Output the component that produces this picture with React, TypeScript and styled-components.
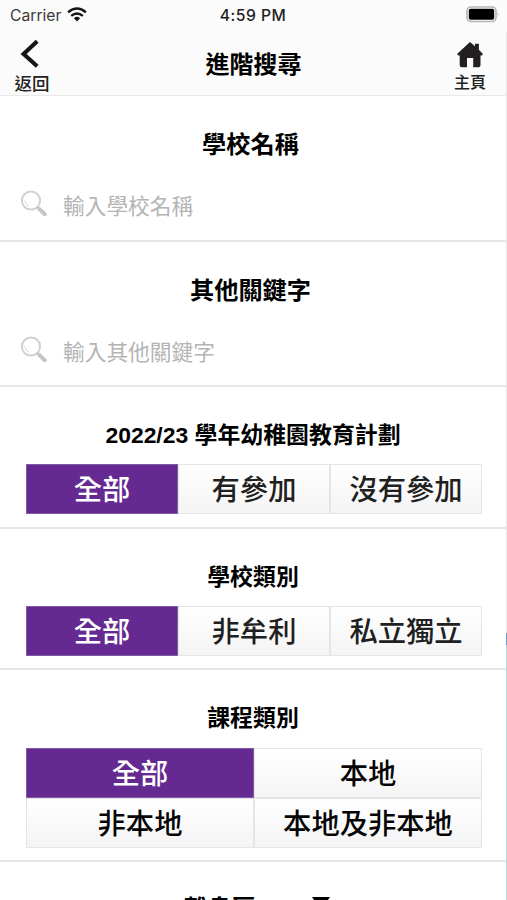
import React from "react";
import styled, { createGlobalStyle } from "styled-components";

const GlobalStyle = createGlobalStyle`
  * { box-sizing: border-box; }
  html, body { margin: 0; padding: 0; background: #fff; overflow: hidden; }
  body { font-family: "Liberation Sans", "Noto Sans CJK TC", sans-serif; color: #000; }
`;

const Screen = styled.div`
  position: relative;
  width: 507px;
  height: 900px;
  overflow: hidden;
  display: flex;
  flex-direction: column;
  background: #fff;
`;

const StatusBar = styled.div`
  display: grid;
  grid-template-columns: 1fr auto 1fr;
  align-items: center;
  flex: none;
  height: 32px;
  padding: 0 7px 2px 10px;
  background: #fbfbfb;
  font-family: Inter, sans-serif;
  font-size: 15.7px;
  color: #3a3a3a;
`;

const Carrier = styled.div`
  display: flex;
  align-items: center;
  gap: 6px;
  svg { margin-top: -1px; }
`;

const Clock = styled.div`
  margin-left: -4px;
  font-weight: 500;
  letter-spacing: 0.45px;
  color: #222;
`;

const Battery = styled.svg`
  justify-self: end;
  margin-top: -2px;
`;

const NavBar = styled.header`
  display: grid;
  grid-template-columns: 64px 1fr 74px;
  flex: none;
  height: 64px;
  background: #fbfbfb;
  border-bottom: 1px solid #e9e9e9;
`;

const NavButton = styled.div<{ $size: number; $gap: number }>`
  display: flex;
  flex-direction: column;
  align-items: center;
  padding-top: 7px;
  font-family: "Noto Sans CJK TC", sans-serif;
  font-size: ${(p) => p.$size}px;
  font-weight: 500;
  line-height: 24px;
  color: #222;
  svg { display: block; margin-bottom: ${(p) => p.$gap}px; }
`;

const NavTitle = styled.h1`
  margin: 0;
  padding-left: 10px;
  text-align: center;
  font-family: "Noto Sans CJK TC", sans-serif;
  font-size: 24px;
  font-weight: 700;
  line-height: 62px;
`;

const Section = styled.section<{ $height: number }>`
  flex: none;
  height: ${(p) => p.$height}px;
  border-bottom: 2px solid #e6e6e6;
`;

const Heading = styled.h2<{ $size: number; $height: number; $drop: number; $inset: number }>`
  margin: 0;
  padding: ${(p) => p.$drop}px ${(p) => p.$inset}px 0 0;
  height: ${(p) => p.$height}px;
  line-height: ${(p) => p.$height - p.$drop}px;
  text-align: center;
  font-size: ${(p) => p.$size}px;
  font-weight: 700;
  white-space: nowrap;
`;

const SearchRow = styled.div`
  display: flex;
  align-items: center;
  height: 30px;
  padding-left: 20px;
  gap: 15px;
  font-family: "Noto Sans CJK TC", sans-serif;
  font-size: 21.7px;
  font-weight: 400;
  line-height: 28px;
  color: #b4b4b4;
  svg { margin-top: -6px; flex: none; }
  span { margin-top: -2px; }
`;

const Options = styled.div<{ $cols: number }>`
  display: grid;
  grid-template-columns: repeat(${(p) => p.$cols}, 1fr);
  grid-auto-rows: 50px;
  width: 456px;
  margin-left: 26px;
`;

const Option = styled.div<{ $active: boolean; $dark: boolean }>`
  border: 1px solid ${(p) => (p.$active ? "#8059a7" : "#e5e5e5")};
  background: ${(p) => (p.$active ? "#652a91" : "linear-gradient(#ffffff, #f4f4f4)")};
  color: ${(p) => (p.$active ? "#fff" : p.$dark ? "#050505" : "#202020")};
  font-family: "Noto Sans CJK TC", sans-serif;
  font-size: 28.3px;
  font-weight: 500;
  line-height: 46px;
  text-align: center;
  white-space: nowrap;
`;

const DistrictRow = styled.div`
  display: flex;
  align-items: flex-start;
  padding: 27px 0 0 184px;
  font-family: "Noto Sans CJK TC", sans-serif;
  font-size: 24px;
  font-weight: 700;
  line-height: 36px;
  svg { margin: 6px 0 0 55px; }
`;

const Scrollbar = styled.div`
  position: absolute;
  top: 32px;
  right: 0;
  bottom: 0;
  width: 1px;
  background: linear-gradient(#e8e8e8 0 601px, #6b9bc8 601px 613px, #b2dad8 613px);
`;

const WifiIcon = () => (
  <svg width="20" height="15" viewBox="0 0 20 15" fill="none" stroke="#151515">
    <path d="M1.1 5.4Q10-2.3 18.9 5.4" strokeWidth="2.5" />
    <path d="M4.2 8.9Q10 4 15.8 8.9" strokeWidth="2.4" />
    <path d="M6.9 11.2Q10 8.5 13.1 11.2L10 14.5Z" fill="#151515" stroke="none" />
  </svg>
);

const BatteryIcon = () => (
  <Battery width="34" height="17" viewBox="0 0 34 17">
    <rect x="1" y="1" width="29" height="14.5" rx="4" fill="#fff" stroke="#b5b5b5" strokeWidth="1.6" />
    <rect x="2.8" y="2.8" width="25.4" height="10.9" rx="1.8" fill="#000" />
    <path d="M31.7 6Q33.4 8.2 31.7 10.4Z" fill="#aaa" />
  </Battery>
);

const BackIcon = () => (
  <svg width="34" height="31" viewBox="0 0 34 31" fill="none" stroke="#161616" strokeWidth="4.1">
    <path d="M22.2 2.2L8.6 15L22.2 27.2" />
  </svg>
);

const HomeIcon = () => (
  <svg width="28" height="31" viewBox="0 0 28 31" fill="#231f20">
    <path d="M14 3L18.9 7.3V4.8H22.9V10.7L26.7 14.7Q27 16.8 24.5 16.5V26Q24.5 28.2 22.5 28.2H17.2V19H11V28.2H5.7Q3.7 28.2 3.7 26V16.5Q1 16.8 1.3 14.7Z" />
  </svg>
);

const MagnifierIcon = () => (
  <svg width="28" height="27" viewBox="0 0 28 27" fill="none">
    <circle cx="11" cy="10.5" r="9.1" stroke="#d1d1d1" strokeWidth="2" />
    <path d="M4.9 10.5Q5.5 14.7 9 16.2" stroke="#ddd" strokeWidth="1.2" />
    <path d="M17 16.7L20.3 19.3" stroke="#c5c5c5" strokeWidth="2" />
    <path d="M19.2 18.9L24.8 24.2" stroke="#c6c6c6" strokeWidth="4" strokeLinecap="round" />
  </svg>
);

const TriangleIcon = () => (
  <svg width="20" height="16" viewBox="0 0 20 16">
    <path d="M1 2H19L10 15Z" />
  </svg>
);

type SearchProps = { title: string; placeholder: string; height: number };

const SearchSection = ({ title, placeholder, height }: SearchProps) => (
  <Section $height={height}>
    <Heading $size={24.2} $height={95} $drop={3} $inset={6}>
      {title}
    </Heading>
    <SearchRow>
      <MagnifierIcon />
      <span>{placeholder}</span>
    </SearchRow>
  </Section>
);

type ChoiceProps = { title: string; options: string[]; cols: number; height: number; lead: number };

const ChoiceSection = ({ title, options, cols, height, lead }: ChoiceProps) => (
  <Section $height={height}>
    <Heading $size={22.9} $height={lead} $drop={19} $inset={1}>
      {title}
    </Heading>
    <Options $cols={cols}>
      {options.map((label, i) => (
        <Option key={label} $active={i === 0} $dark={cols === 2}>
          {label}
        </Option>
      ))}
    </Options>
  </Section>
);

export default function App() {
  return (
    <>
      <GlobalStyle />
      <Screen>
        <StatusBar>
          <Carrier>
            Carrier
            <WifiIcon />
          </Carrier>
          <Clock>4:59 PM</Clock>
          <BatteryIcon />
        </StatusBar>
        <NavBar>
          <NavButton $size={17.5} $gap={1}>
            <BackIcon />
            返回
          </NavButton>
          <NavTitle>進階搜尋</NavTitle>
          <NavButton $size={16} $gap={-1}>
            <HomeIcon />
            主頁
          </NavButton>
        </NavBar>
        <SearchSection title="學校名稱" placeholder="輸入學校名稱" height={146} />
        <SearchSection title="其他關鍵字" placeholder="輸入其他關鍵字" height={145} />
        <ChoiceSection title="2022/23 學年幼稚園教育計劃" options={["全部", "有參加", "沒有參加"]} cols={3} height={142} lead={77} />
        <ChoiceSection title="學校類別" options={["全部", "非牟利", "私立獨立"]} cols={3} height={141} lead={77} />
        <ChoiceSection title="課程類別" options={["全部", "本地", "非本地", "本地及非本地"]} cols={2} height={192} lead={78} />
        <DistrictRow>
          離島區
          <TriangleIcon />
        </DistrictRow>
        <Scrollbar />
      </Screen>
    </>
  );
}
